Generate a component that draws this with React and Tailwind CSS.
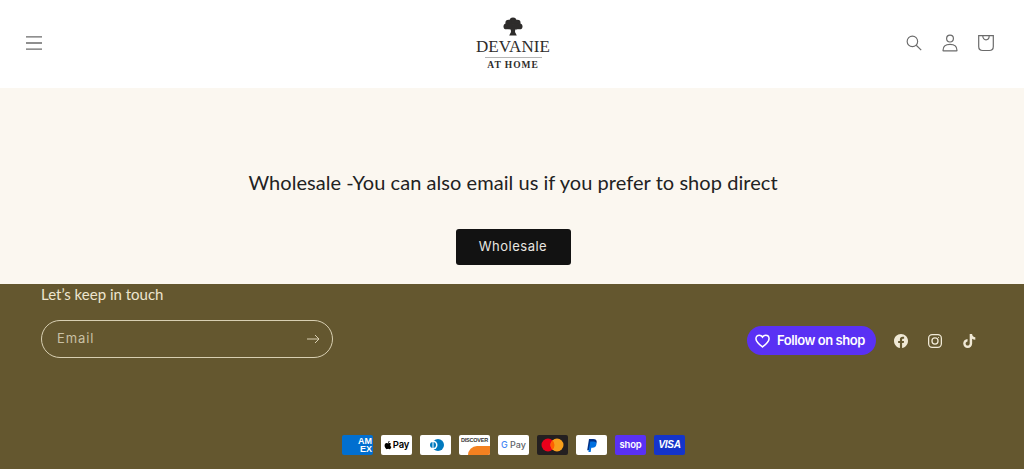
import React from 'react';

const PayCard = ({ bg, children }) => (
    <div className={`w-[31px] h-[20px] rounded-[2px] flex items-center justify-center overflow-hidden ${bg}`}>
        {children}
    </div>
);

const TreeLogo = () => (
    <svg width="20" height="19" viewBox="0 0 20 19" fill="#2e2c2b">
        <circle cx="10" cy="4" r="3.6" />
        <circle cx="5.6" cy="6" r="3.2" />
        <circle cx="14.4" cy="6" r="3.2" />
        <circle cx="3.4" cy="9.4" r="2.9" />
        <circle cx="16.6" cy="9.4" r="2.9" />
        <circle cx="7.4" cy="9.4" r="3.2" />
        <circle cx="12.6" cy="9.4" r="3.2" />
        <path d="M7.6 11h4.8l-.4 4 1.8 3.4H6.2L8 15z" />
    </svg>
);

const Header = () => (
    <header className="h-[88px] bg-white grid grid-cols-3 items-center pl-[26px] pr-[29px]">
        <svg className="mb-[2px]" width="16" height="14" viewBox="0 0 16 14" fill="none" stroke="#6b6b6b" strokeWidth="1.3">
            <path d="M0 .8h16M0 7h16M0 13.200h16" />
        </svg>
        <div className="flex flex-col items-center pl-[5px] text-[#2e2c2b] font-['Liberation_Serif',serif]">
            <TreeLogo />
            <div className="text-[17px] leading-[17px] tracking-[0.1px] mt-[2px]">DEVANIE</div>
            <div className="w-[57px] h-px bg-[#b5b5b5] mt-[2px]"></div>
            <div className="text-[9.5px] leading-[11px] tracking-[0.95px] mt-[2px] font-semibold">AT HOME</div>
        </div>
        <div className="flex items-center justify-end gap-[18px] mb-[2px] text-[#6b6b6b]">
            <svg className="mx-[1px]" width="16" height="16" viewBox="0 0 18 18" fill="none" stroke="currentColor" strokeWidth="1.3">
                <circle cx="7.2" cy="7.2" r="5.9" />
                <path d="M11.5 11.5l5.6 5.6" />
            </svg>
            <svg width="18" height="18" viewBox="0 0 18 18" fill="none" stroke="currentColor" strokeWidth="1.2">
                <circle cx="9" cy="4.6" r="3.4" />
                <path d="M2 16.4c0-3.6 2.6-6 7-6s7 2.400 7 6c0 .3-.2.5-.5.5h-13c-.3 0-.5-.2-.5-.5z" />
            </svg>
            <svg width="18" height="18" viewBox="0 0 18 18" fill="none" stroke="currentColor" strokeWidth="1.2">
                <path d="M1.700 1.600h14.600v10.900c0 2.400-1.600 4-4 4H5.700c-2.400 0-4-1.600-4-4z" />
                <path d="M5.800 1.800c0 2.500 1.300 4 3.200 4s3.200-1.500 3.200-4" />
            </svg>
        </div>
    </header>
);

const Wholesale = () => (
    <section className="h-[196px] bg-[#fbf7f0] flex flex-col items-center pt-[81px] pl-[2px]">
        <h2 className="text-[20px] leading-[26px] text-[#222] tracking-[0.05px] font-['Lato',sans-serif]">
            Wholesale -You can also email us if you prefer to shop direct
        </h2>
        <button className="mt-[34px] w-[115px] h-[36px] rounded-[3px] bg-[#121212] text-[#e8e6e1] text-[13px] tracking-[0.5px] font-['Inter',sans-serif]">
            Wholesale
        </button>
    </section>
);

const Footer = () => (
    <footer className="h-[185px] bg-[#64572f] pt-[1px] font-['Inter',sans-serif]">
        <div className="flex items-end justify-between pl-[41px] pr-[48px]">
            <div>
                <div className="text-[15px] leading-[18px] text-[#ede5cf] font-['Lato',sans-serif]">Let’s keep in touch</div>
                <div className="mt-[17px] w-[292px] h-[38px] rounded-[19px] border border-[#d8cfb2] flex items-center justify-between pl-[15px] pr-[12px]">
                    <span className="text-[13px] text-[#c9c0a4] tracking-[0.9px]">Email</span>
                    <svg width="13" height="10" viewBox="0 0 13 10" fill="none" stroke="#d8cfb2" strokeWidth="1">
                        <path d="M0 5h12M8 1l4 4-4 4" />
                    </svg>
                </div>
            </div>
            <div className="flex items-center mb-[3px]">
                <div className="w-[129px] h-[29px] rounded-[15px] bg-[#5a31f4] flex items-center pl-[8px] gap-[7px] text-white">
                    <svg width="15" height="14" viewBox="0 0 24 22" fill="none" stroke="currentColor" strokeWidth="2.400">
                        <path d="M12 20.500C5 15 1.500 11.500 1.500 7.200 1.500 4 4 1.600 7 1.600c2 0 3.800 1 5 3 1.200-2 3-3 5-3 3 0 5.500 2.400 5.500 5.600 0 4.300-3.500 7.800-10.500 13.300z" />
                    </svg>
                    <span className="text-[13px] font-semibold tracking-[-0.45px] leading-none">Follow on shop</span>
                </div>
                <div className="flex items-center gap-[20px] ml-[18px] text-[#f0e9d6]">
                    <svg width="14" height="14" viewBox="0 0 24 24" fill="currentColor">
                        <path d="M24 12.070C24 5.400 18.630 0 12 0S0 5.400 0 12.070c0 6.030 4.390 11.020 10.130 11.930v-8.440H7.080v-3.490h3.050V9.410c0-3.020 1.790-4.690 4.530-4.690 1.310 0 2.690.24 2.690.24v2.970h-1.510c-1.490 0-1.960.93-1.960 1.880v2.260h3.330l-.53 3.490h-2.800V24C19.610 23.090 24 18.100 24 12.070z" />
                    </svg>
                    <svg width="14" height="14" viewBox="0 0 24 24" fill="none" stroke="currentColor" strokeWidth="2.200">
                        <rect x="1.100" y="1.100" width="21.800" height="21.800" rx="6" />
                        <circle cx="12" cy="12" r="5.200" />
                        <circle cx="18" cy="6" r="1" fill="currentColor" stroke="none" />
                    </svg>
                    <svg width="14" height="14" viewBox="0 0 24 24" fill="currentColor">
                        <path d="M17.300 0h-4.100v16.300c0 1.900-1.500 3.500-3.500 3.500s-3.500-1.600-3.500-3.500c0-1.900 1.500-3.400 3.300-3.500V8.700c-4.100.1-7.400 3.500-7.400 7.600C2.100 20.500 5.500 24 9.800 24s7.600-3.500 7.600-7.700V8c1.500 1.100 3.400 1.800 5.400 1.800V5.700c-3-.1-5.400-2.600-5.500-5.700z" />
                    </svg>
                </div>
            </div>
        </div>
        <div className="flex justify-center gap-[8px] mt-[77px] pl-[3px]">
            <PayCard bg="bg-[#016fd0]">
                <span className="text-[9px] leading-[8px] font-bold text-white text-right w-full pr-[1px] font-['Liberation_Sans',sans-serif]">AM<br />EX</span>
            </PayCard>
            <PayCard bg="bg-white">
                <div className="flex items-center gap-[1px]">
                    <svg width="8" height="10" viewBox="0 0 24 28" fill="#000">
                        <path d="M18.700 14.800c0-3.100 2.500-4.600 2.600-4.700-1.400-2.100-3.700-2.400-4.500-2.400-1.900-.2-3.700 1.100-4.700 1.100s-2.500-1.100-4.100-1.100c-2.100 0-4 1.200-5.100 3.100-2.200 3.800-.6 9.400 1.500 12.500 1 1.500 2.300 3.200 3.900 3.100 1.600-.1 2.200-1 4.100-1s2.500 1 4.100 1c1.700 0 2.800-1.500 3.800-3 1.200-1.700 1.700-3.400 1.700-3.500-.1 0-3.300-1.300-3.300-5.100zM15.600 5.700c.9-1 1.400-2.500 1.300-3.900-1.200 0-2.800.8-3.700 1.900-.8.900-1.500 2.400-1.300 3.800 1.400.1 2.800-.7 3.700-1.800z" />
                    </svg>
                    <span className="text-[9.5px] font-semibold text-black tracking-[-0.2px] leading-none">Pay</span>
                </div>
            </PayCard>
            <PayCard bg="bg-white">
                <svg width="19" height="12" viewBox="0 0 19 12">
                    <circle cx="12" cy="6" r="6" fill="#0079be" />
                    <circle cx="7" cy="6" r="4.500" fill="#fff" />
                    <circle cx="7" cy="6" r="3" fill="#0079be" />
                    <rect x="6.500" y="2" width="1" height="8" fill="#fff" />
                </svg>
            </PayCard>
            <div className="w-[31px] h-[20px] rounded-[2px] overflow-hidden bg-white flex flex-col items-center">
                <span className="text-[5.500px] leading-[11px] font-bold text-[#333] tracking-[-0.2px] font-['Liberation_Sans',sans-serif]">DISCOVER</span>
                <div className="w-[22px] self-end flex-1 bg-[#f48120] rounded-tl-[14px]"></div>
            </div>
            <PayCard bg="bg-white">
                <span className="text-[9px] text-[#5f6368] font-medium"><span className="text-[#4285f4]">G</span> Pay</span>
            </PayCard>
            <PayCard bg="bg-[#231f20]">
                <svg width="23" height="14" viewBox="0 0 23 14">
                    <circle cx="7" cy="7" r="6.500" fill="#eb001b" />
                    <circle cx="16" cy="7" r="6.500" fill="#f79e1b" />
                    <path d="M11.500 2.300a6.500 6.500 0 0 1 0 9.400 6.500 6.500 0 0 1 0-9.400z" fill="#ff5f00" />
                </svg>
            </PayCard>
            <PayCard bg="bg-white">
                <svg width="10" height="13" viewBox="0 0 10 13">
                    <path d="M2 0h4.200C8.600 0 10 1.200 9.700 3.300 9.300 5.700 7.700 7 5.500 7H3.800l-.7 4.300H.2z" fill="#003087" />
                    <path d="M3.300 2.500h3.500c1.700 0 2.900 1 2.600 2.900-.4 2.200-1.900 3.300-3.900 3.300H4.300L3.700 13H1.400z" fill="#0070e0" />
                </svg>
            </PayCard>
            <PayCard bg="bg-[#5a31f4]">
                <span className="text-[9.500px] font-semibold text-white tracking-[-0.2px] leading-none">shop</span>
            </PayCard>
            <PayCard bg="bg-[#1434cb]">
                <span className="text-[10px] italic font-bold text-white tracking-[-0.3px] leading-none font-['Liberation_Sans',sans-serif]">VISA</span>
            </PayCard>
        </div>
    </footer>
);

export default function App() {
    return (
        <div className="w-[1024px] h-[469px] overflow-hidden">
            <Header />
            <Wholesale />
            <Footer />
        </div>
    );
}
